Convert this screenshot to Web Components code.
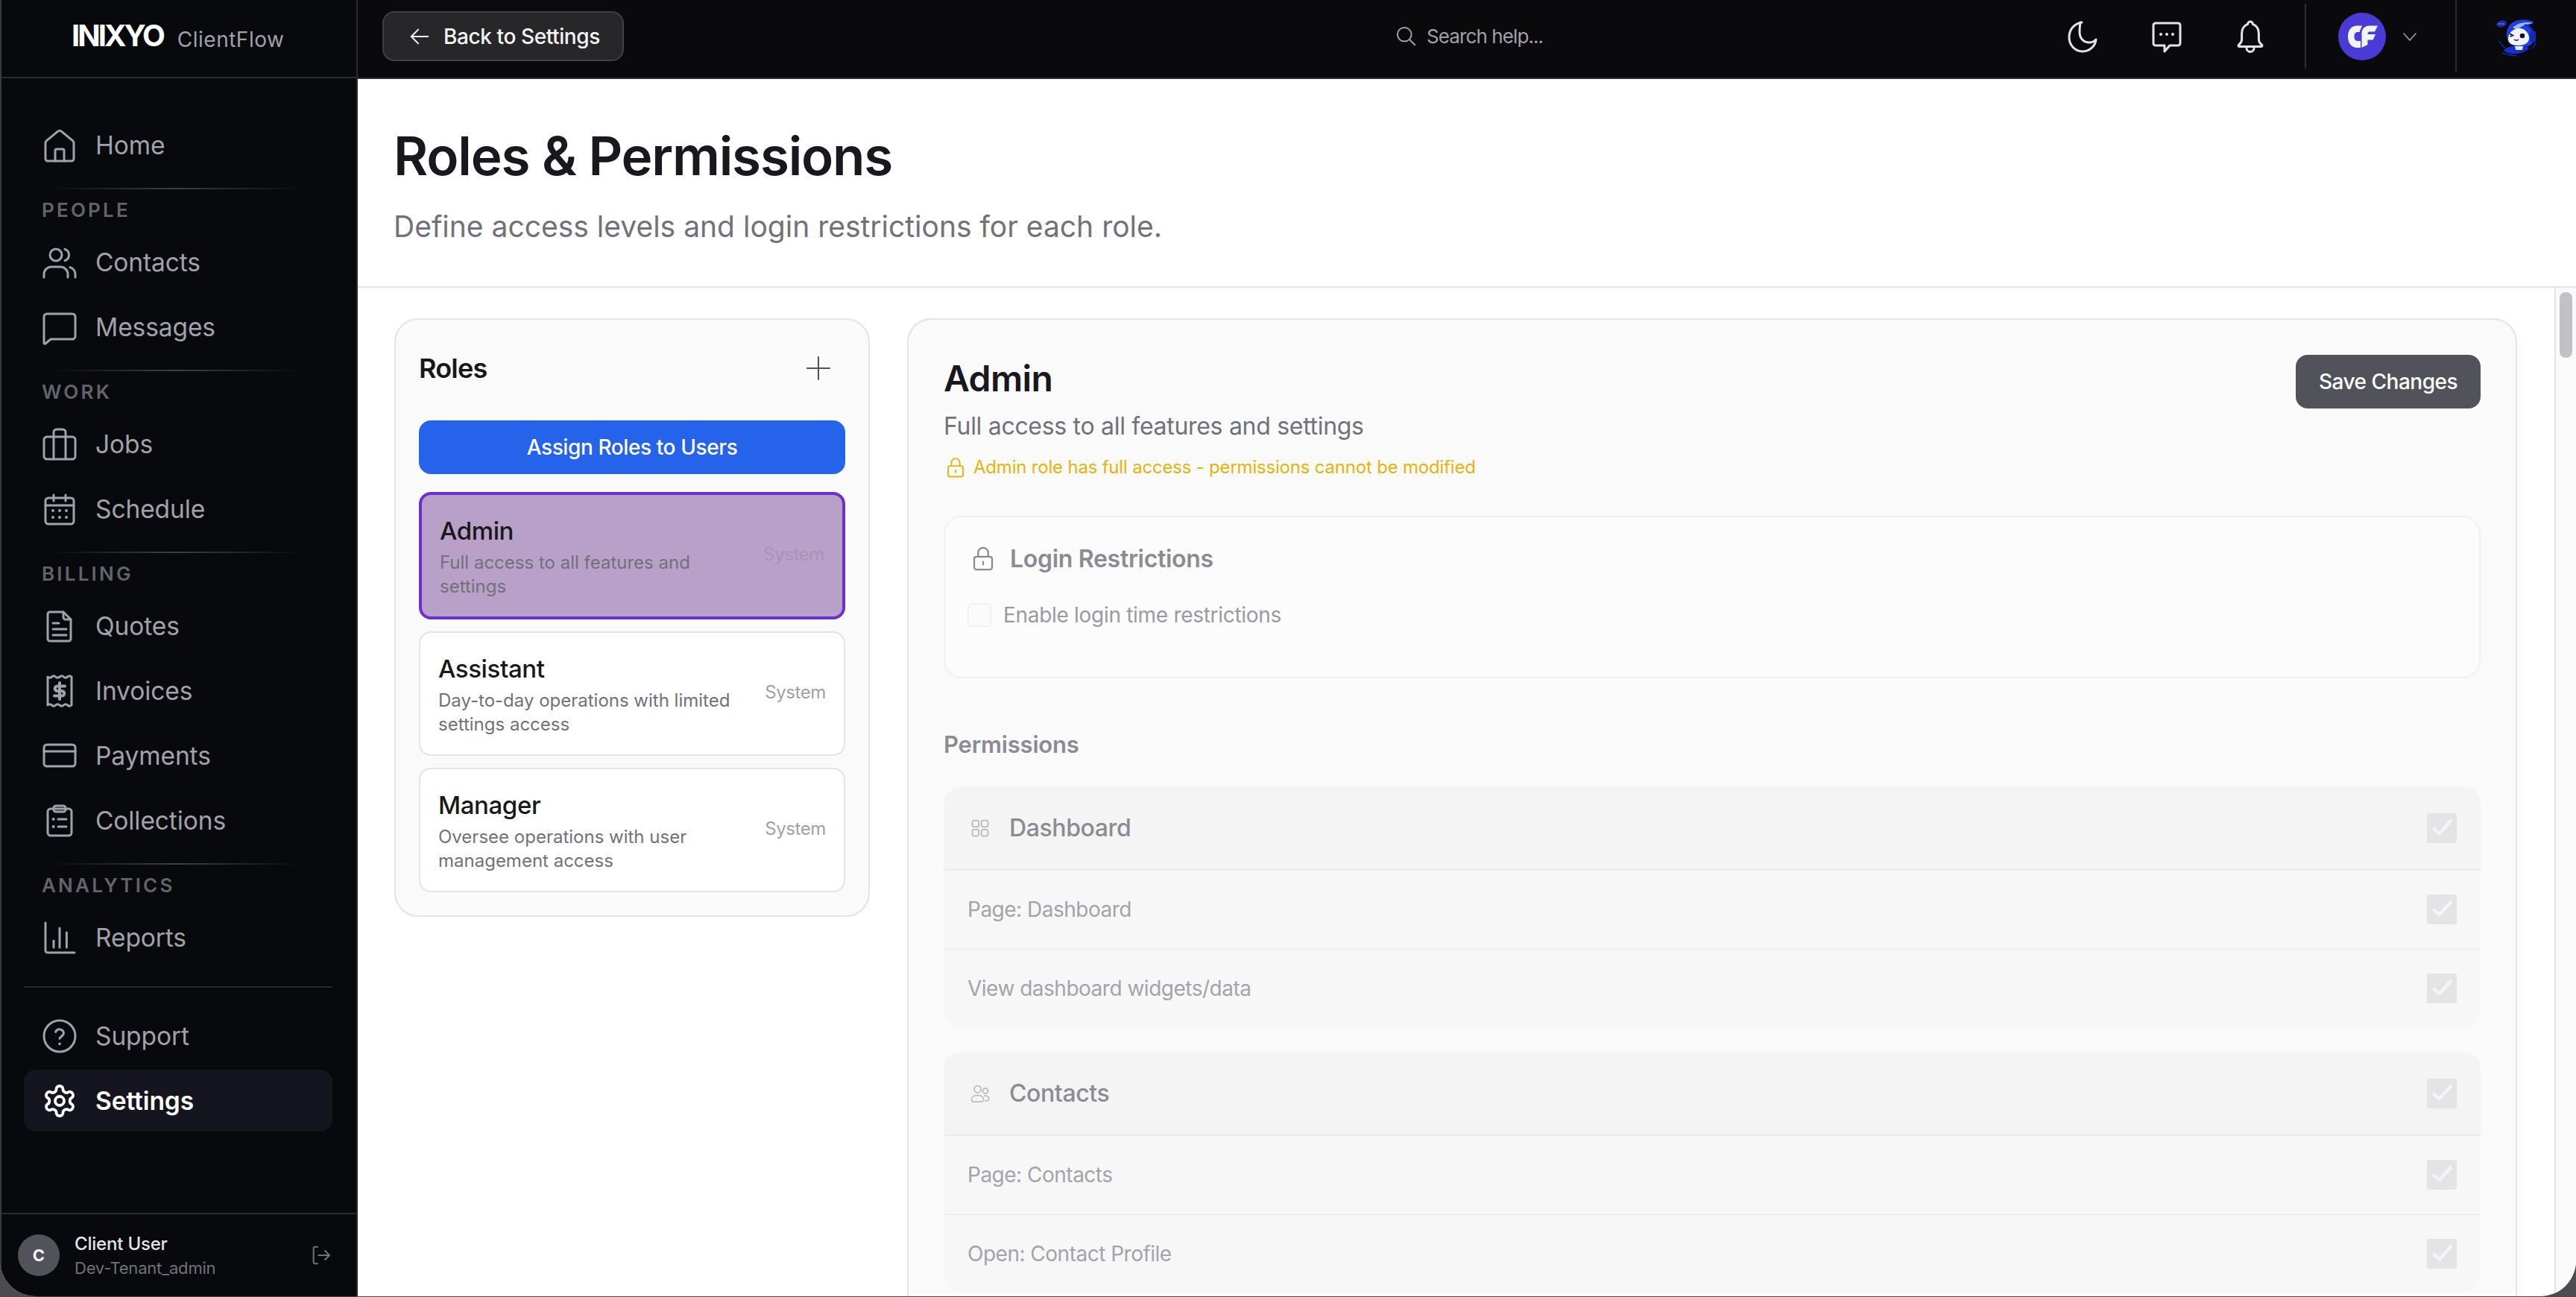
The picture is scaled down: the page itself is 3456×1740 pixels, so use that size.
<!DOCTYPE html>
<html lang="en">
<head>
<meta charset="utf-8">
<title>Roles &amp; Permissions</title>
<style>
  html, body { margin: 0; height: 100%; background: #4b4b50; overflow: hidden; }
  body { font-family: Inter, "Liberation Sans", sans-serif; color: #18181b; }
</style>
</head>
<body>
<app-shell>
  <side-bar slot="side">
    <nav-item icon="home">Home</nav-item>
    <nav-label>PEOPLE</nav-label>
    <nav-item icon="users">Contacts</nav-item>
    <nav-item icon="message">Messages</nav-item>
    <nav-label>WORK</nav-label>
    <nav-item icon="briefcase">Jobs</nav-item>
    <nav-item icon="calendar">Schedule</nav-item>
    <nav-label>BILLING</nav-label>
    <nav-item icon="doc">Quotes</nav-item>
    <nav-item icon="receipt">Invoices</nav-item>
    <nav-item icon="card">Payments</nav-item>
    <nav-item icon="clipboard">Collections</nav-item>
    <nav-label>ANALYTICS</nav-label>
    <nav-item icon="chart">Reports</nav-item>
    <nav-item slot="bottom" icon="help">Support</nav-item>
    <nav-item slot="bottom" icon="gear" active>Settings</nav-item>
  </side-bar>
  <top-bar slot="top"></top-bar>
  <page-head slot="head" heading="Roles &amp; Permissions">Define access levels and login restrictions for each role.</page-head>
  <roles-panel slot="left">
    <role-item name="Admin" selected>Full access to all features and settings</role-item>
    <role-item name="Assistant">Day-to-day operations with limited settings access</role-item>
    <role-item name="Manager">Oversee operations with user management access</role-item>
  </roles-panel>
  <role-detail slot="right">
    <perm-group heading="Dashboard" icon="grid">
      <perm-row>Page: Dashboard</perm-row>
      <perm-row>View dashboard widgets/data</perm-row>
    </perm-group>
    <perm-group heading="Contacts" icon="people">
      <perm-row>Page: Contacts</perm-row>
      <perm-row>Open: Contact Profile</perm-row>
    </perm-group>
  </role-detail>
</app-shell>

<script>
const ICONS = {
  home: '<path d="M2.5 21V10.4c0-.6.3-1.2.8-1.6l7.4-6.1a2 2 0 0 1 2.6 0l7.4 6.1c.5.4.8 1 .8 1.6V21a1.5 1.5 0 0 1-1.5 1.5H4A1.5 1.5 0 0 1 2.5 21z"/><path d="M9 22.5v-7a1 1 0 0 1 1-1h4a1 1 0 0 1 1 1v7"/>',
  users: '<circle cx="9.5" cy="7" r="4"/><path d="M15.5 3.2a4 4 0 0 1 0 7.6"/><path d="M1.5 22v-2a5 5 0 0 1 5-5h6a5 5 0 0 1 5 5v2"/><path d="M19 15.3a5 5 0 0 1 3.5 4.7v2"/>',
  message: '<path d="M1.5 5a2 2 0 0 1 2-2h17a2 2 0 0 1 2 2v13a2 2 0 0 1-2 2H6l-3.5 3a.6.6 0 0 1-1-.5z"/>',
  briefcase: '<rect x="1.5" y="7" width="21" height="15" rx="2"/><path d="M8 7V4a2 2 0 0 1 2-2h4a2 2 0 0 1 2 2v3"/><path d="M8 7v15M16 7v15"/>',
  calendar: '<rect x="2.5" y="4.5" width="19" height="17.5" rx="2"/><path d="M2.5 9.5h19M8 2.5v4M16 2.5v4"/><g fill="currentColor" stroke="none"><circle cx="7.5" cy="13" r="1"/><circle cx="12" cy="13" r="1"/><circle cx="16.5" cy="13" r="1"/><circle cx="7.5" cy="17.5" r="1"/><circle cx="12" cy="17.5" r="1"/><circle cx="16.5" cy="17.5" r="1"/></g>',
  doc: '<path d="M5.5 2.5h9l5 5v13a1.5 1.5 0 0 1-1.5 1.5H5.5A1.5 1.5 0 0 1 4 20.5V4a1.5 1.5 0 0 1 1.5-1.5z"/><path d="M14.5 2.5V6a1.5 1.5 0 0 0 1.5 1.5h3.5"/><path d="M7.5 10h4M7.5 14h9M7.5 18h9"/>',
  receipt: '<path d="M4 2.5q1.3 1.2 2.7 0t2.6 0 2.7 0 2.7 0 2.6 0 2.7 0V21.5q-1.3 1.2-2.7 0t-2.6 0-2.7 0-2.7 0-2.6 0-2.7 0z"/><path stroke-width="2" d="M15.5 8.7h-5a1.6 1.6 0 0 0 0 3.3h3a1.6 1.6 0 0 1 0 3.3h-5M12 6.5v11"/>',
  card: '<rect x="1.5" y="4.5" width="21" height="14.5" rx="2"/><path d="M1.5 9h21"/>',
  clipboard: '<rect x="4" y="4" width="16" height="18" rx="2"/><rect x="8" y="2" width="8" height="4" rx="1.5"/><path d="M11 11h5.5M11 16h5.5"/><g fill="currentColor" stroke="none"><circle cx="7.8" cy="11" r="1"/><circle cx="7.8" cy="16" r="1"/></g>',
  chart: '<path d="M2.5 2v18.5A1.5 1.5 0 0 0 4 22h18"/><path d="M8 14v4.5M12 5.5v13M16.7 8.5v10"/>',
  help: '<circle cx="12" cy="12" r="10.5"/><path d="M9.3 9.2a2.8 2.8 0 0 1 5.4.8c0 1.9-2.7 2.6-2.7 3.6"/><circle cx="12" cy="17.2" r=".9" fill="currentColor" stroke="none"/>',
  gear: '<path d="M12.22 2h-.44a2 2 0 0 0-2 2v.18a2 2 0 0 1-1 1.73l-.43.25a2 2 0 0 1-2 0l-.15-.08a2 2 0 0 0-2.73.73l-.22.38a2 2 0 0 0 .73 2.73l.15.1a2 2 0 0 1 1 1.72v.51a2 2 0 0 1-1 1.74l-.15.09a2 2 0 0 0-.73 2.73l.22.38a2 2 0 0 0 2.73.73l.15-.08a2 2 0 0 1 2 0l.43.25a2 2 0 0 1 1 1.73V20a2 2 0 0 0 2 2h.44a2 2 0 0 0 2-2v-.18a2 2 0 0 1 1-1.73l.43-.25a2 2 0 0 1 2 0l.15.08a2 2 0 0 0 2.73-.73l.22-.39a2 2 0 0 0-.73-2.73l-.15-.08a2 2 0 0 1-1-1.74v-.5a2 2 0 0 1 1-1.74l.15-.09a2 2 0 0 0 .73-2.73l-.22-.38a2 2 0 0 0-2.73-.73l-.15.08a2 2 0 0 1-2 0l-.43-.25a2 2 0 0 1-1-1.73V4a2 2 0 0 0-2-2z"/><circle cx="12" cy="12" r="3"/>',
  logout: '<path d="M9 3.5H6.5A1.5 1.5 0 0 0 5 5v14a1.5 1.5 0 0 0 1.5 1.5H9"/><path d="M10 12h11M16.5 7.5 21 12l-4.5 4.5"/>',
  back: '<path d="M21 12H3M10.5 4.5 3 12l7.5 7.5"/>',
  search: '<circle cx="10.5" cy="10.5" r="8"/><path d="m16.5 16.5 6 6"/>',
  moon: '<path d="M11.5 2.5C6 3.5 3 7.5 3 12.5c0 5.3 4 9.5 9 9.5 4.6 0 8.5-3.4 9-8-1.2 1.3-2.8 2-4.5 2-4 0-6.500-3-6.500-7 0-2.600.2-4.500.5-6.500z"/>',
  chat: '<path d="M4.500 3h15A1.500 1.500 0 0 1 21 4.500v12a1.500 1.500 0 0 1-1.500 1.500H14l-3.500 4v-4h-6A1.500 1.500 0 0 1 3 16.500v-12A1.500 1.500 0 0 1 4.500 3z"/><g fill="currentColor" stroke="none"><circle cx="8" cy="10.500" r="1"/><circle cx="12" cy="10.500" r="1"/><circle cx="16" cy="10.500" r="1"/></g>',
  bell: '<path d="M12 2c-1 0-1.700.8-1.700 1.700-2.500 1-4 3.500-4 6.300v4c0 1.500-.8 2.600-2 3.500-.5.4-.3 1.200.4 1.200h14.600c.7 0 .9-.8.4-1.200-1.200-.9-2-2-2-3.500v-4c0-2.800-1.500-5.300-4-6.300C13.700 2.800 13 2 12 2z"/><path d="M9.500 19.700a2.500 2.500 0 0 0 5 0"/>',
  chevron: '<path d="m4 8 8 9 8-9"/>',
  plus: '<path d="M12 3v18M3 12h18"/>',
  lock: '<rect x="4" y="10.500" width="16" height="11.500" rx="2"/><path d="M7.500 10.500V7a4.500 4.500 0 0 1 9 0v3.500"/><path d="M12 15v2.500"/>',
  grid: '<rect x="3" y="3" width="7.500" height="7.500" rx="2.200"/><rect x="13.500" y="3" width="7.500" height="7.500" rx="2.200"/><rect x="3" y="13.500" width="7.500" height="7.500" rx="2.200"/><rect x="13.500" y="13.500" width="7.500" height="7.500" rx="2.200"/>',
  people: '<circle cx="9" cy="7" r="4"/><circle cx="18" cy="9" r="3"/><path d="M2 19c0-3 3-5 7-5s7 2 7 5-3 2.500-7 2.500S2 22 2 19z"/><path d="M17 14.500c3 0 5 1.500 5 3.500s-1.500 2.500-4 2.500"/>'
};

// shared svg for the line icons, size and stroke set per use
function icon(name, size, sw) {
  return `<svg width="${size}" height="${size}" viewBox="0 0 24 24" fill="none" stroke="currentColor" stroke-width="${sw}" stroke-linecap="round" stroke-linejoin="round" aria-hidden="true">${ICONS[name]}</svg>`;
}

class BaseElement extends HTMLElement {
  constructor() {
    super();
    this.attachShadow({ mode: 'open' });
  }
  connectedCallback() {
    this.render();
  }
}

class AppShell extends BaseElement {
  render() {
    this.shadowRoot.innerHTML = `
      <style>
        :host { display: flex; width: 3456px; height: 1739px; background: #fff; border-radius: 0 0 48px 48px; overflow: hidden; }
        .side { flex: 0 0 480px; display: flex; }
        .main { flex: 1; min-width: 0; display: flex; flex-direction: column; }
        .body { flex: 1; min-height: 0; display: flex; }
        .content { flex: 1; min-width: 0; display: flex; gap: 50px; padding: 41px 50px 0 49px; overflow: hidden; }
      </style>
      <div class="side"><slot name="side"></slot></div>
      <div class="main">
        <slot name="top"></slot>
        <slot name="head"></slot>
        <div class="body">
          <div class="content"><slot name="left"></slot><slot name="right"></slot></div>
          <scroll-track></scroll-track>
        </div>
      </div>`;
  }
}

class SideBar extends BaseElement {
  render() {
    this.shadowRoot.innerHTML = `
      <style>
        :host { display: flex; flex-direction: column; width: 480px; box-sizing: border-box; background: #08090c; border-left: 2px solid #39393e; border-right: 2px solid #2c2c30; color: #a1a1aa; }
        .logo { height: 105px; flex: none; box-sizing: border-box; border-bottom: 2px solid #2c2c30; display: flex; align-items: center; gap: 19px; padding: 0 0 0 94px; }
        .mark { color: #fff; font-weight: 700; font-size: 40px; letter-spacing: -3px; position: relative; top: -4px; }
        .name { color: #a1a1aa; font-size: 28px; letter-spacing: .5px; position: relative; top: 1px; }
        nav { flex: 1; display: flex; flex-direction: column; padding: 48px 32px 0 30px; }
        .items { display: flex; flex-direction: column; gap: 4px; }
        .bottom { margin-top: 24px; padding-top: 23px; border-top: 2px solid #27272a; display: flex; flex-direction: column; gap: 4px; }
        .foot { height: 112px; flex: none; box-sizing: border-box; border-top: 2px solid #2c2c30; display: flex; align-items: center; padding: 0 32px 0 22px; }
        .avatar { width: 56px; height: 56px; border-radius: 50%; background: #52525b; color: #f4f4f5; font-weight: 700; font-size: 22px; display: grid; place-items: center; }
        .who { margin-left: 20px; flex: 1; display: flex; flex-direction: column; }
        .who b { color: #e4e4e7; font-weight: 500; font-size: 24px; line-height: 34px; letter-spacing: -.2px; }
        .who span { color: #71717a; font-size: 22px; line-height: 30px; letter-spacing: -.2px; }
        .out { color: #71717a; display: flex; }
      </style>
      <div class="logo"><span class="mark">INIXYO</span><span class="name">ClientFlow</span></div>
      <nav>
        <div class="items"><slot></slot></div>
        <div class="bottom"><slot name="bottom"></slot></div>
      </nav>
      <div class="foot">
        <div class="avatar">C</div>
        <div class="who"><b>Client User</b><span>Dev-Tenant_admin</span></div>
        <div class="out">${icon('logout', 32, 1.5)}</div>
      </div>`;
  }
}

class NavItem extends BaseElement {
  render() {
    const active = this.hasAttribute('active');
    this.shadowRoot.innerHTML = `
      <style>
        :host { display: flex; align-items: center; height: 83px; gap: 24px; padding-left: 24px; border-radius: 16px; color: ${active ? '#fff' : '#a1a1aa'}; background: ${active ? '#151520' : 'transparent'}; }
        svg { flex: none; display: block; }
        span { font-size: 33.5px; font-weight: ${active ? 600 : 400}; letter-spacing: -.1px; }
      </style>
      ${icon(this.getAttribute('icon'), 48, active ? 1.9 : 1.5)}
      <span><slot></slot></span>`;
  }
}

class NavLabel extends BaseElement {
  render() {
    this.shadowRoot.innerHTML = `
      <style>
        :host { display: block; margin-top: 12px; margin-bottom: 8px; }
        .rule { height: 2px; margin: 0 40px 0 34px; background: linear-gradient(90deg, transparent, #3f3f46 50%, transparent); }
        .text { margin: 12px 0 0 24px; height: 32px; line-height: 32px; font-size: 26px; font-weight: 600; letter-spacing: 3.2px; color: #63636b; }
      </style>
      <div class="rule"></div>
      <div class="text"><slot></slot></div>`;
  }
}

class TopBar extends BaseElement {
  render() {
    this.shadowRoot.innerHTML = `
      <style>
        :host { display: flex; flex: none; align-items: center; height: 106px; box-sizing: border-box; background: #0a0a0d; border-bottom: 2px solid #2c2c30; padding: 0 0 7px 33px; color: #e4e4e7; position: relative; }
        .back { display: flex; align-items: center; gap: 17px; box-sizing: border-box; height: 67px; width: 324px; padding-left: 33px; background: #27272a; border: 2px solid #3f3f46; border-radius: 16px; color: #f4f4f5; font-size: 28px; font-weight: 500; letter-spacing: -.4px; }
        .back svg { flex: none; }
        .search { position: absolute; left: 1392px; top: 0; height: 96px; display: flex; align-items: center; gap: 14px; color: #a1a1aa; font-size: 26px; letter-spacing: -.9px; }
        .tools { margin-left: auto; display: flex; align-items: center; height: 100%; }
        .tool { width: 40px; height: 40px; display: grid; place-items: center; }
        .tool svg { margin: -4px; }
        .tool + .tool { margin-left: 72.5px; }
        .sep { width: 2px; background: #2c2c30; }
        .sep.a { height: 87px; margin-left: 53px; align-self: flex-start; margin-top: 5px; }
        .sep.b { height: 97px; margin-left: 49px; align-self: flex-start; }
        .cf { margin-left: 43px; display: block; }
        .chev { margin-left: 20px; color: #a1a1aa; display: flex; }
        .bot { margin: 0 51px; display: block; }
      </style>
      <div class="back">${icon('back', 30, 1.6)}<span>Back to Settings</span></div>
      <div class="search">${icon('search', 28, 1.7)}<span>Search help...</span></div>
      <div class="tools">
        <div class="tool">${icon('moon', 48, 1.5)}</div>
        <div class="tool">${icon('chat', 48, 1.5)}</div>
        <div class="tool">${icon('bell', 48, 1.5)}</div>
        <div class="sep a"></div>
        <svg class="cf" width="64" height="64" viewBox="0 0 64 64" aria-hidden="true">
          <circle cx="32" cy="32" r="32" fill="#4a3bd6"/>
          <path d="M32 17.5h-6.500C17.500 17.500 13 23.500 13 32s4.500 15 12.500 15H30V38h-4c-3 0-4.500-2.500-4.500-6s1.500-6 4.500-6h2.500z" fill="#f4f4f5"/>
          <path d="M31.500 47V28c0-6 4-10.500 10.500-10.500h11L49 25.500h-7c-1.500 0-2.500 1-2.500 2.500v1H50l-3.500 7.500h-7V43z" fill="#f4f4f5"/>
        </svg>
        <div class="chev">${icon('chevron', 24, 1.6)}</div>
        <div class="sep b"></div>
        <svg class="bot" width="58" height="56" viewBox="0 0 58 56" aria-hidden="true">
          <ellipse cx="9" cy="11" rx="7" ry="4.500" fill="#1a2aa8" transform="rotate(-15 9 11)"/>
          <path d="M5 11h8" stroke="#cfd6ff" stroke-width="1.200" stroke-dasharray="1.500 1"/>
          <path d="M18 34C12 20 20 8 32 6c8-1 14 0 20 2-2 4-6 4-8 6 6 4 10 12 8 20-2 6-8 8-16 8-8 0-16-2-18-8z" fill="#1f3fe0"/>
          <path d="M24 16c8-7 18-8 28-6-8 1-16 3-22 9z" fill="#9db8ff"/>
          <path d="M18 30c1-8 8-13 15-13 7 0 12 5 13 12 1 7-6 11-14 11s-15-3-14-10z" fill="#f2f3fa"/>
          <rect x="47" y="20" width="8" height="16" rx="4" fill="#1428b8"/>
          <path d="M40 12c7 2 11 6 11 10" stroke="#1428b8" stroke-width="2" fill="none"/>
          <circle cx="37" cy="27" r="3.300" fill="#14141e"/>
          <path d="M20 24l4.500 2.500-4 1.500" stroke="#14141e" stroke-width="1.600" fill="none"/>
          <path d="M26 32q3 2.500 6 0" stroke="#14141e" stroke-width="1.400" fill="none"/>
          <path d="M12 46c6-6 26-7 34-3-4 9-30 11-34 3z" fill="#1630d0"/>
          <path d="M27 41h11l-1 5H28z" fill="#e6e9fb"/>
          <path d="M6 34c2 4 4 7 8 9M50 44c2-2 4-4 5-8M10 50c6 2 12 3 20 4" stroke="#1428b8" stroke-width="1.500" fill="none"/>
        </svg>
      </div>`;
  }
}

class PageHead extends BaseElement {
  render() {
    this.shadowRoot.innerHTML = `
      <style>
        :host { display: block; flex: none; height: 280px; box-sizing: border-box; background: #fff; border-bottom: 2px solid #e4e4e7; padding: 68px 0 0 48px; }
        h1 { margin: 0; font-size: 71px; line-height: 70px; font-weight: 600; letter-spacing: -1.2px; color: #18181f; }
        p { margin: 37px 0 0; font-size: 39px; line-height: 46px; letter-spacing: 0; color: #71717a; }
      </style>
      <h1>${this.getAttribute('heading').replace('&', '&amp;')}</h1>
      <p><slot></slot></p>`;
  }
}

class ScrollTrack extends BaseElement {
  render() {
    this.shadowRoot.innerHTML = `
      <style>
        :host { display: block; flex: 0 0 29px; box-sizing: border-box; background: #fafafa; border-left: 2px solid #e4e4e7; padding: 6px 5px 0 5px; }
        div { height: 88px; border-radius: 8px; background: #c1c1c6; }
      </style>
      <div></div>`;
  }
}

class RolesPanel extends BaseElement {
  render() {
    this.shadowRoot.innerHTML = `
      <style>
        :host { display: flex; flex-direction: column; flex: 0 0 638px; box-sizing: border-box; align-self: flex-start; background: #fafafa; border: 2px solid #e4e4e7; border-radius: 32px; padding: 41px 31px 31px 31px; }
        .head { display: flex; justify-content: space-between; align-items: center; height: 48px; }
        h2 { margin: 0; font-size: 36px; font-weight: 600; letter-spacing: -.8px; color: #18181b; }
        .plus { color: #52525b; display: flex; margin-right: 16px; }
        .assign { margin-top: 46px; height: 72px; border-radius: 16px; background: #2563eb; color: #fff; font-size: 28px; font-weight: 500; letter-spacing: -.4px; display: grid; place-items: center; }
        .list { margin-top: 24px; display: flex; flex-direction: column; gap: 16px; }
      </style>
      <div class="head"><h2>Roles</h2><div class="plus">${icon('plus', 40, 1.2)}</div></div>
      <div class="assign">Assign Roles to Users</div>
      <div class="list"><slot></slot></div>`;
  }
}

class RoleItem extends BaseElement {
  render() {
    const on = this.hasAttribute('selected');
    this.shadowRoot.innerHTML = `
      <style>
        :host { display: flex; align-items: flex-start; box-sizing: border-box; background: ${on ? '#b9a0c9' : '#fff'}; border: ${on ? '4px solid #6d2fd0' : '2px solid #e4e4e7'}; border-radius: 16px; padding: 24px; }
        .text { flex: 1; min-width: 0; }
        .name { font-size: 33px; line-height: 48px; font-weight: 500; letter-spacing: -.4px; color: #18181b; }
        .desc { margin-top: 3px; width: 410px; font-size: 24px; line-height: 32px; letter-spacing: 0; color: #71717a; }
        .tag { margin-top: 40px; font-size: 24px; line-height: 32px; letter-spacing: -.4px; color: ${on ? '#a893b6' : '#a1a1aa'}; }
      </style>
      <div class="text">
        <div class="name">${this.getAttribute('name')}</div>
        <div class="desc"><slot></slot></div>
      </div>
      <div class="tag">System</div>`;
  }
}

class RoleDetail extends BaseElement {
  render() {
    this.shadowRoot.innerHTML = `
      <style>
        :host { display: block; flex: 1; min-width: 0; box-sizing: border-box; background: #fafafa; border: 2px solid #e4e4e7; border-bottom: 0; border-radius: 32px 32px 0 0; padding: 47px 47px 0 47px; height: 1400px; }
        .top { display: flex; justify-content: space-between; align-items: flex-start; }
        h2 { margin: 0; font-size: 48px; line-height: 64px; font-weight: 600; letter-spacing: -.6px; color: #18181f; }
        .sub { margin-top: 8px; font-size: 32px; line-height: 48px; letter-spacing: -.3px; color: #71717a; }
        .warn { margin-top: 15px; display: flex; align-items: center; gap: 9px; padding-left: 1px; font-size: 24px; line-height: 32px; letter-spacing: -.2px; color: #eab308; }
        .warn svg { flex: none; }
        .save { width: 248px; height: 72px; border-radius: 16px; background: #52525b; color: #fff; font-size: 28px; font-weight: 500; letter-spacing: -.5px; display: grid; place-items: center; }
        .login { margin-top: 49px; height: 218px; box-sizing: border-box; background: #fcfcfc; border: 2px solid #f1f1f3; border-radius: 24px; padding: 31px 30px 0; }
        .ltitle { display: flex; align-items: center; gap: 18px; height: 48px; padding-left: 3px; color: #8b8b93; font-size: 32px; font-weight: 600; letter-spacing: -.3px; }
        .ltitle svg { flex: none; }
        .opt { margin-top: 36px; display: flex; align-items: center; gap: 16px; height: 32px; color: #9a9aa2; font-size: 28px; letter-spacing: -.3px; }
        .box { width: 32px; height: 32px; box-sizing: border-box; border: 2px solid #f1f1f3; border-radius: 6px; background: #fbfbfb; }
        h3 { margin: 65px 0 32px; font-size: 31px; line-height: 48px; font-weight: 600; letter-spacing: -.2px; color: #8b8b93; }
        .groups { display: flex; flex-direction: column; gap: 33px; }
      </style>
      <div class="top">
        <div>
          <h2>Admin</h2>
          <div class="sub">Full access to all features and settings</div>
          <div class="warn">${icon('lock', 30, 1.5)}<span>Admin role has full access - permissions cannot be modified</span></div>
        </div>
        <div class="save">Save Changes</div>
      </div>
      <div class="login">
        <div class="ltitle">${icon('lock', 36, 1.5)}<span>Login Restrictions</span></div>
        <div class="opt"><div class="box"></div><span>Enable login time restrictions</span></div>
      </div>
      <h3>Permissions</h3>
      <div class="groups"><slot></slot></div>`;
  }
}

const CHECK = `<svg width="40" height="40" viewBox="0 0 40 40" aria-hidden="true"><rect width="40" height="40" rx="3" fill="#e4e4e7"/><path d="M8 20l9 7L33 9" fill="none" stroke="#f4f4f5" stroke-width="4.5"/></svg>`;

class PermGroup extends BaseElement {
  render() {
    this.shadowRoot.innerHTML = `
      <style>
        :host { display: block; border-radius: 24px; overflow: hidden; background: #f7f7f8; }
        .head { height: 113px; box-sizing: border-box; display: flex; align-items: center; gap: 25px; padding: 0 32px 0 35px; background: #f4f4f5; border-bottom: 2px solid #ebebed; color: #8b8b93; }
        .head svg { flex: none; display: block; }
        .head .ic { color: #b9b9bf; display: flex; }
        .head span { flex: 1; font-size: 32px; font-weight: 500; letter-spacing: -.4px; }
      </style>
      <div class="head"><div class="ic">${icon(this.getAttribute('icon'), 28, 1.5)}</div><span>${this.getAttribute('heading')}</span>${CHECK}</div>
      <slot></slot>`;
  }
}

class PermRow extends BaseElement {
  render() {
    this.shadowRoot.innerHTML = `
      <style>
        :host { display: flex; align-items: center; justify-content: space-between; box-sizing: border-box; height: 106px; padding: 0 32px; border-bottom: 2px solid #efeff1; color: #a3a3ab; font-size: 28px; letter-spacing: -.5px; }
        :host(:last-child) { height: 104px; border-bottom: 0; }
        svg { display: block; }
      </style>
      <span><slot></slot></span>${CHECK}`;
  }
}

customElements.define('app-shell', AppShell);
customElements.define('side-bar', SideBar);
customElements.define('nav-item', NavItem);
customElements.define('nav-label', NavLabel);
customElements.define('top-bar', TopBar);
customElements.define('page-head', PageHead);
customElements.define('scroll-track', ScrollTrack);
customElements.define('roles-panel', RolesPanel);
customElements.define('role-item', RoleItem);
customElements.define('role-detail', RoleDetail);
customElements.define('perm-group', PermGroup);
customElements.define('perm-row', PermRow);
</script>
</body>
</html>
